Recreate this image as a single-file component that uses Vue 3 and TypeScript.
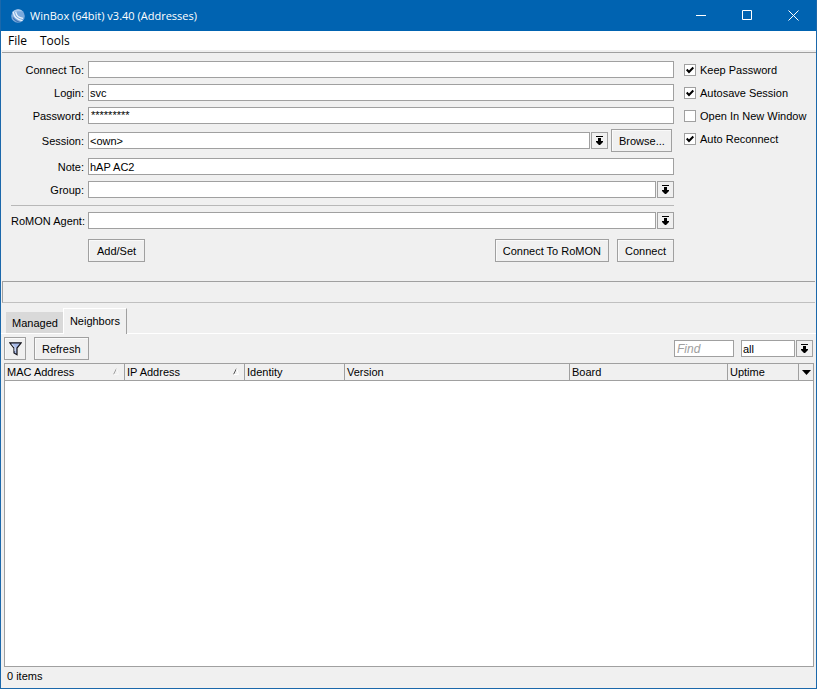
<script setup lang="ts">
import { ref } from 'vue'

interface Option {
  id: string
  label: string
  checked: boolean
}

interface Column {
  name: string
  key: string
  sort?: 'active' | 'faded'
}

const address = ref('')
const login = ref('svc')
const password = ref('winboxpwd')
const session = ref('<own>')
const note = ref('hAP AC2')
const group = ref('')
const agent = ref('')
const find = ref('')
const scope = ref('all')
const tab = ref('Neighbors')

const options = ref<Option[]>([
  { id: 'keep', label: 'Keep Password', checked: true },
  { id: 'autosave', label: 'Autosave Session', checked: true },
  { id: 'new-window', label: 'Open In New Window', checked: false },
  { id: 'reconnect', label: 'Auto Reconnect', checked: true },
])

const columns: Column[] = [
  { name: 'MAC Address', key: 'mac', sort: 'faded' },
  { name: 'IP Address', key: 'ip', sort: 'active' },
  { name: 'Identity', key: 'identity' },
  { name: 'Version', key: 'version' },
  { name: 'Board', key: 'board' },
  { name: 'Uptime', key: 'uptime' },
]
</script>

<template>
  <div class="window">
    <header class="titlebar">
      <svg class="logo" viewBox="0 0 14 14" aria-hidden="true">
        <circle cx="7" cy="7" r="6.8" fill="#7ba9dc" />
        <path d="M1 4a6.8 6.8 0 0 1 11-1.500C8 2 4 2.500 1 4z" fill="#a9c9ec" />
        <path d="M2.300 3.200C3 8 6 11 11.500 11.600" fill="none" stroke="#e9f3fd" stroke-width="1.300" />
        <path d="M4.700 2.900C5.200 6.600 7.800 8.900 12 9.300" fill="none" stroke="#e9f3fd" stroke-width="1.200" />
        <path d="M2 8.500C3.500 11 6 12.600 8.500 13" fill="none" stroke="#3f73b4" stroke-width="1.200" />
      </svg>
      <h1>WinBox (64bit) v3.40 (Addresses)</h1>
      <button class="caption" type="button" aria-label="Minimize">
        <svg viewBox="0 0 11 11"><path d="M0 5.500h10" /></svg>
      </button>
      <button class="caption" type="button" aria-label="Maximize">
        <svg viewBox="0 0 11 11"><path d="M.5.5h9v9h-9z" /></svg>
      </button>
      <button class="caption" type="button" aria-label="Close">
        <svg viewBox="0 0 11 11"><path d="M.5.5l10 10M10.500.5l-10 10" /></svg>
      </button>
    </header>

    <nav class="menubar">
      <button type="button">File</button>
      <button type="button">Tools</button>
    </nav>

    <form class="connect" @submit.prevent>
      <div class="fields">
        <div class="row">
          <label for="address">Connect To:</label>
          <input id="address" v-model="address" class="box" type="text" />
        </div>
        <div class="row">
          <label for="login">Login:</label>
          <input id="login" v-model="login" class="box" type="text" />
        </div>
        <div class="row">
          <label for="password">Password:</label>
          <div class="box secret">
            <span aria-hidden="true">{{ '*'.repeat(password.length) }}</span>
            <input id="password" v-model="password" type="password" />
          </div>
        </div>
        <div class="row tall">
          <label for="session">Session:</label>
          <div class="combo">
            <select id="session" v-model="session">
              <option>&lt;own&gt;</option>
            </select>
            <span class="drop"><svg viewBox="0 0 8 9"><path d="M0 0h7v1H0zM2 2h3v3h2v1L4 9H3L0 6V5h2z" /></svg></span>
          </div>
          <button class="btn browse" type="button">Browse...</button>
        </div>
        <div class="row">
          <label for="note">Note:</label>
          <input id="note" v-model="note" class="box" type="text" />
        </div>
        <div class="row">
          <label for="group">Group:</label>
          <div class="combo">
            <select id="group" v-model="group"><option value=""></option></select>
            <span class="drop"><svg viewBox="0 0 8 9"><path d="M0 0h7v1H0zM2 2h3v3h2v1L4 9H3L0 6V5h2z" /></svg></span>
          </div>
        </div>
        <hr />
        <div class="row">
          <label for="agent">RoMON Agent:</label>
          <div class="combo">
            <select id="agent" v-model="agent"><option value=""></option></select>
            <span class="drop"><svg viewBox="0 0 8 9"><path d="M0 0h7v1H0zM2 2h3v3h2v1L4 9H3L0 6V5h2z" /></svg></span>
          </div>
        </div>
        <div class="actions">
          <button class="btn first" type="button">Add/Set</button>
          <button class="btn" type="button">Connect To RoMON</button>
          <button class="btn" type="submit">Connect</button>
        </div>
      </div>

      <div class="options">
        <label v-for="option in options" :key="option.id" class="option">
          <span class="tick">
            <input v-model="option.checked" type="checkbox" />
            <svg v-if="option.checked" viewBox="0 0 8 8"><path d="M.7 3.500L3 6 7.300 1.500" /></svg>
          </span>
          <span class="caption-text">{{ option.label }}</span>
        </label>
      </div>
    </form>

    <div class="status" role="status"></div>

    <div class="tabs" role="tablist">
      <button
        v-for="name in ['Managed', 'Neighbors']"
        :key="name"
        type="button"
        role="tab"
        class="tab"
        :class="{ active: tab === name }"
        :aria-selected="tab === name"
        @click="tab = name"
      >{{ name }}</button>
    </div>

    <div class="toolbar">
      <button class="btn filter" type="button" aria-label="Filter">
        <svg viewBox="0 0 13 14">
          <path d="M.8.8h11.400L8 6v6.800L5 11V6z" fill="#a9bbe8" stroke="#15151c" stroke-width="1.200" />
          <path d="M2.800 2L6 5.700V9" fill="none" stroke="#e4ebfb" />
        </svg>
      </button>
      <button class="btn refresh" type="button">Refresh</button>
      <input v-model="find" class="box find" type="text" placeholder="Find" aria-label="Find" />
      <div class="combo scope">
        <select v-model="scope" aria-label="Search in"><option>all</option></select>
        <span class="drop"><svg viewBox="0 0 8 9"><path d="M0 0h7v1H0zM2 2h3v3h2v1L4 9H3L0 6V5h2z" /></svg></span>
      </div>
    </div>

    <main class="list">
      <table>
        <thead>
          <tr>
            <th v-for="column in columns" :key="column.key" :class="column.key" scope="col">
              <div class="head">
                {{ column.name }}
                <svg v-if="column.sort" :class="column.sort" viewBox="0 0 6 7">
                  <path d="M.5 6.500L3.500.5" stroke="#555" />
                  <path d="M3.500.5L5.500 6.500h-5" stroke="#fff" />
                </svg>
              </div>
            </th>
            <th class="more">
              <button type="button" aria-label="Choose columns">
                <svg viewBox="0 0 9 5"><path d="M0 0h9L4.500 5z" /></svg>
              </button>
            </th>
          </tr>
        </thead>
        <tbody></tbody>
      </table>
    </main>

    <footer>0 items</footer>
  </div>
</template>

<style>
body {
  margin: 0;
}
</style>

<style scoped>
* {
  box-sizing: border-box;
}

.window {
  display: flex;
  flex-direction: column;
  min-height: 100vh;
  border: 1px solid #1b68ab;
  border-top: 0;
  background: #f0f0f0;
  color: #000;
  font: 11px/15px "Liberation Sans", Arial, sans-serif;
}

button,
input,
select {
  margin: 0;
  border-radius: 0;
  color: inherit;
  font: inherit;
}

svg {
  display: block;
}

.titlebar {
  display: flex;
  height: 31px;
  align-items: center;
  padding-left: 10px;
  background: #0063b1;
  color: #fff;
}

.logo {
  width: 14px;
  height: 14px;
}

h1 {
  flex: 1;
  margin: 0 0 0 5px;
  font: 11px/16px "Open Sans", "Noto Sans", sans-serif;
}

.caption {
  display: grid;
  width: 46px;
  height: 31px;
  place-items: center;
  padding: 0;
  border: 0;
  background: none;
}

.caption svg {
  width: 11px;
  height: 11px;
  fill: none;
  stroke: #fff;
}

.menubar {
  display: flex;
  height: 19px;
  gap: 13px;
  padding: 0 7px;
  background: #fff;
}

.menubar button {
  padding: 0;
  border: 0;
  background: none;
  font: 12px/20px "Open Sans", "Noto Sans", sans-serif;
}

.connect {
  display: flex;
  height: 229px;
  gap: 10px;
  margin: 2px 0 0 1px;
  padding: 8px 10px 0 9px;
  border-top: 1px solid #a0a0a0;
}

.fields {
  display: flex;
  flex: 1;
  flex-direction: column;
  gap: 6px;
}

.row {
  display: flex;
  height: 17px;
  align-items: center;
}

.row label {
  width: 73px;
  margin-right: 4px;
  padding-top: 2px;
  text-align: right;
  white-space: nowrap;
}

.tall {
  height: 23px;
  margin: -1px 0 0;
}

.box,
.combo select {
  width: 100%;
  height: 17px;
  flex: 1;
  min-width: 0;
  padding: 1px 1px 0;
  border: 1px solid #a0a0a0;
  background: #fff;
  line-height: 15px;
  outline: 0;
}

.secret {
  display: grid;
  padding: 0 2px;
}

.secret span,
.secret input {
  grid-area: 1 / 1;
}

.secret input {
  width: 100%;
  height: 15px;
  padding: 0;
  border: 0;
  background: none;
  color: transparent;
  outline: 0;
}

.combo {
  display: grid;
  flex: 1;
  grid-template-columns: 1fr 18px;
}

.combo select {
  grid-area: 1 / 1 / 2 / 3;
  appearance: none;
  background: linear-gradient(#fff, #fff) left / calc(100% - 18px) 100% no-repeat;
  border-right: 0;
}

.drop {
  z-index: 1;
  display: grid;
  grid-area: 1 / 2;
  place-items: center;
  border: 1px solid #a0a0a0;
  box-shadow: -1px 0 #f0f0f0, -2px 0 #a0a0a0;
  margin-left: 1px;
  background: #f0f0f0;
  pointer-events: none;
}

.drop svg {
  width: 8px;
  height: 9px;
}

.btn {
  height: 23px;
  padding: 1px 7px 0;
  border: 1px solid #a0a0a0;
  background: #f0f0f0;
  box-shadow: inset 1px 1px #fafafa;
  white-space: nowrap;
}

.browse {
  width: 61px;
  margin: 0 2px 0 3px;
}

hr {
  width: 100%;
  height: 1px;
  margin: 1px 0 0;
  border: 0;
  background: #b8b8b8;
}

.actions {
  display: flex;
  gap: 8px;
  margin: 4px 0 0 77px;
}

.first {
  min-width: 57px;
  margin-right: auto;
}

.options {
  display: flex;
  width: 122px;
  flex-direction: column;
  gap: 6px;
}

.option {
  display: flex;
  height: 17px;
  align-items: center;
  gap: 4px;
  white-space: nowrap;
}

.caption-text {
  padding-top: 2px;
}

.tick {
  display: grid;
  width: 12px;
  height: 12px;
  place-items: center;
}

.tick input,
.tick svg {
  grid-area: 1 / 1;
}

.tick input {
  width: 12px;
  height: 12px;
  appearance: none;
  border: 1px solid #a0a0a0;
  background: #fff;
}

.tick svg {
  z-index: 1;
  width: 8px;
  height: 8px;
  fill: none;
  pointer-events: none;
  stroke: #000;
  stroke-width: 2;
}

.status {
  height: 22px;
  margin: 0 1px;
  border: solid #a0a0a0;
  border-width: 1px 0 1px 1px;
  border-bottom-color: #c0c0c0;
}

.tabs {
  display: flex;
  height: 31px;
  align-items: flex-end;
  padding-left: 5px;
  border-bottom: 1px solid #fff;
}

.tab {
  height: 21px;
  padding: 1px 5px 0 6px;
  border: 0;
  background: #d9d9d9;
}

.tab.active {
  height: 26px;
  margin-bottom: -1px;
  padding: 0 6px;
  border: solid #fff;
  border-width: 1px 1px 0;
  border-right-color: #a0a0a0;
  background: #f0f0f0;
}

.toolbar {
  display: flex;
  height: 29px;
  align-items: center;
  padding: 0 3px;
}

.filter {
  width: 22px;
  padding: 0 4px;
}

.filter svg {
  width: 13px;
  height: 14px;
}

.refresh {
  margin: 0 auto 0 8px;
}

.find {
  max-width: 60px;
  margin-right: 7px;
  padding-left: 2px;
  font-size: 12px;
}

.find::placeholder {
  color: #a0a0a0;
  font-style: italic;
}

.scope {
  max-width: 72px;
}

.list {
  flex: 1;
  margin: 0 2px 0 3px;
  border: 1px solid #a0a0a0;
  background: #fff;
}

table {
  width: 100%;
  border-collapse: separate;
  border-spacing: 0;
  table-layout: fixed;
}

th {
  height: 17px;
  padding: 1px 0 0 2px;
  border-right: 1px solid #a0a0a0;
  border-bottom: 1px solid #a0a0a0;
  background: #f0f0f0;
  font-weight: 400;
  text-align: left;
}

.head {
  display: flex;
  align-items: center;
  justify-content: space-between;
  padding-right: 5px;
}

.head svg {
  width: 6px;
  height: 7px;
  margin-bottom: 2px;
  fill: none;
}

.faded {
  opacity: 0.5;
}

.mac,
.ip {
  width: 120px;
}

.identity {
  width: 100px;
}

.board {
  width: 158px;
}

.uptime {
  width: 71px;
}

.more {
  width: 14px;
  padding: 0;
  border-right: 0;
}

.more button {
  display: grid;
  width: 14px;
  height: 15px;
  place-items: center;
  padding: 0;
  border: 0;
  background: none;
}

.more svg {
  width: 9px;
  height: 5px;
}

footer {
  height: 21px;
  padding: 2px 5px;
  margin-left: 1px;
}
</style>
